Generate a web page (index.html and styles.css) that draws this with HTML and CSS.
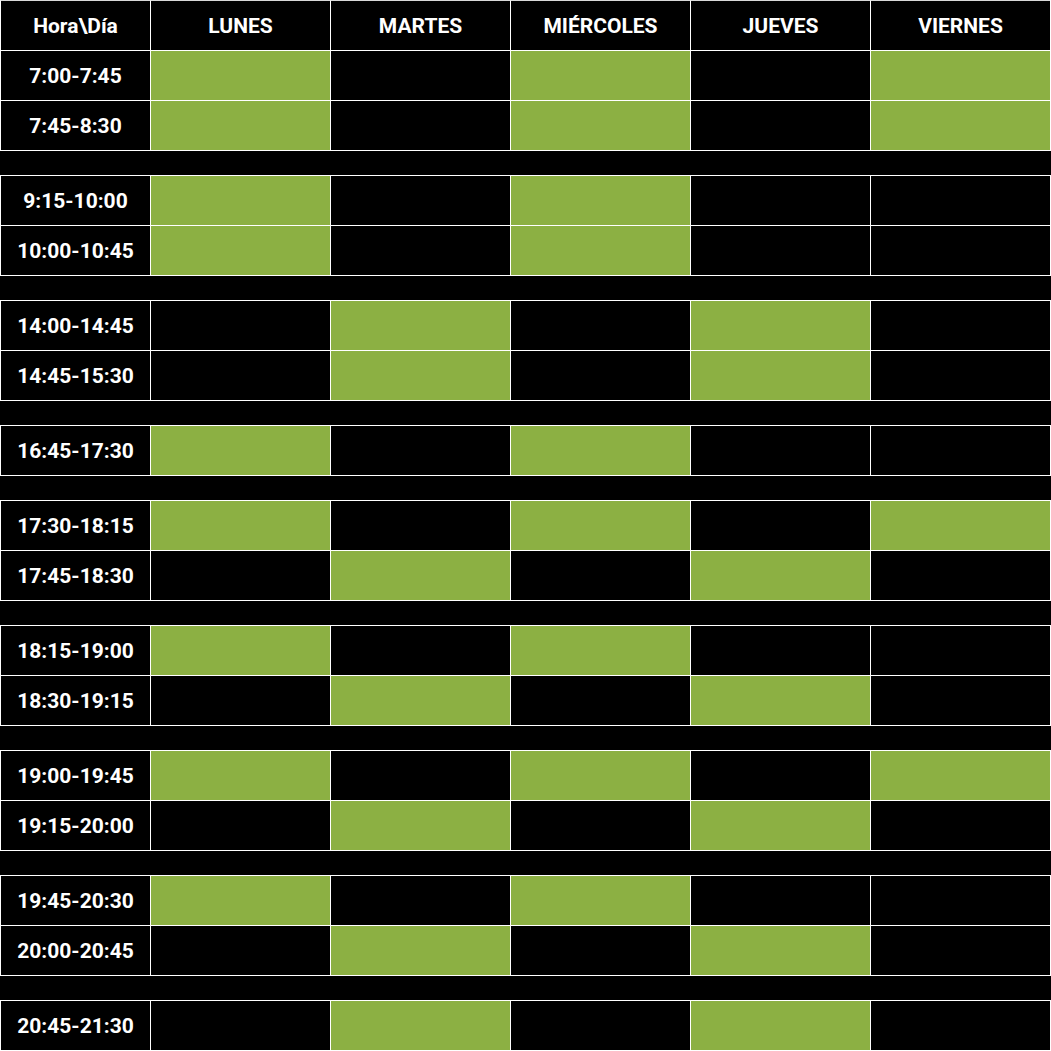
FILE: index.html
```html
<!DOCTYPE html>
<html lang="es">
<head>
<meta charset="utf-8">
<title>Horario</title>
<link rel="stylesheet" href="styles.css">
</head>
<body>
<div class="schedule">
  <div class="row head"><div class="cell">Hora\Día</div><div class="cell">LUNES</div><div class="cell">MARTES</div><div class="cell">MIÉRCOLES</div><div class="cell">JUEVES</div><div class="cell">VIERNES</div></div>

  <div class="row"><div class="cell">7:00-7:45</div><div class="cell on"></div><div class="cell"></div><div class="cell on"></div><div class="cell"></div><div class="cell on"></div></div>
  <div class="row"><div class="cell">7:45-8:30</div><div class="cell on"></div><div class="cell"></div><div class="cell on"></div><div class="cell"></div><div class="cell on"></div></div>
  <div class="sep"></div>
  <div class="row"><div class="cell">9:15-10:00</div><div class="cell on"></div><div class="cell"></div><div class="cell on"></div><div class="cell"></div><div class="cell"></div></div>
  <div class="row"><div class="cell">10:00-10:45</div><div class="cell on"></div><div class="cell"></div><div class="cell on"></div><div class="cell"></div><div class="cell"></div></div>
  <div class="sep"></div>
  <div class="row"><div class="cell">14:00-14:45</div><div class="cell"></div><div class="cell on"></div><div class="cell"></div><div class="cell on"></div><div class="cell"></div></div>
  <div class="row"><div class="cell">14:45-15:30</div><div class="cell"></div><div class="cell on"></div><div class="cell"></div><div class="cell on"></div><div class="cell"></div></div>
  <div class="sep"></div>
  <div class="row"><div class="cell">16:45-17:30</div><div class="cell on"></div><div class="cell"></div><div class="cell on"></div><div class="cell"></div><div class="cell"></div></div>
  <div class="sep"></div>
  <div class="row"><div class="cell">17:30-18:15</div><div class="cell on"></div><div class="cell"></div><div class="cell on"></div><div class="cell"></div><div class="cell on"></div></div>
  <div class="row"><div class="cell">17:45-18:30</div><div class="cell"></div><div class="cell on"></div><div class="cell"></div><div class="cell on"></div><div class="cell"></div></div>
  <div class="sep"></div>
  <div class="row"><div class="cell">18:15-19:00</div><div class="cell on"></div><div class="cell"></div><div class="cell on"></div><div class="cell"></div><div class="cell"></div></div>
  <div class="row"><div class="cell">18:30-19:15</div><div class="cell"></div><div class="cell on"></div><div class="cell"></div><div class="cell on"></div><div class="cell"></div></div>
  <div class="sep"></div>
  <div class="row"><div class="cell">19:00-19:45</div><div class="cell on"></div><div class="cell"></div><div class="cell on"></div><div class="cell"></div><div class="cell on"></div></div>
  <div class="row"><div class="cell">19:15-20:00</div><div class="cell"></div><div class="cell on"></div><div class="cell"></div><div class="cell on"></div><div class="cell"></div></div>
  <div class="sep"></div>
  <div class="row"><div class="cell">19:45-20:30</div><div class="cell on"></div><div class="cell"></div><div class="cell on"></div><div class="cell"></div><div class="cell"></div></div>
  <div class="row"><div class="cell">20:00-20:45</div><div class="cell"></div><div class="cell on"></div><div class="cell"></div><div class="cell on"></div><div class="cell"></div></div>
  <div class="sep"></div>
  <div class="row last"><div class="cell">20:45-21:30</div><div class="cell"></div><div class="cell on"></div><div class="cell"></div><div class="cell on"></div><div class="cell"></div></div>
</div>
</body>
</html>
```

FILE: styles.css
```css
html, body {
  margin: 0;
  padding: 0;
  background: #000;
}

.schedule {
  width: 1051px;
  background: #000;
  color: #fff;
  font-family: Roboto, "Liberation Sans", Arial, sans-serif;
  font-weight: 700;
  font-size: 21px;
}

.row {
  display: grid;
  grid-template-columns: 150px repeat(5, 180px) 1px;
  height: 50px;
}

.row::after {
  content: "";
  border-left: 1px solid #fff;
  border-top: 1px solid #fff;
}

.cell {
  box-sizing: border-box;
  border-left: 1px solid #fff;
  border-top: 1px solid #fff;
  display: flex;
  align-items: center;
  justify-content: center;
  height: 50px;
}

.cell.on {
  background: #8cb043;
}

.head .cell {
  border-top-color: #d8d8d8;
}

.sep {
  height: 25px;
  box-sizing: border-box;
  border-top: 1px solid #fff;
}

.row.last {
  height: 51px;
}

.row.last .cell {
  height: 51px;
  border-bottom: 1px solid #fff;
}
```
